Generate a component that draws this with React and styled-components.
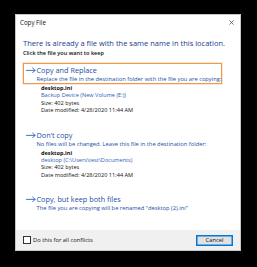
import React from 'react';
import styled, { createGlobalStyle } from 'styled-components';

const GlobalStyle = createGlobalStyle`
  html, body {
    margin: 0;
    padding: 0;
    background: #000;
  }
  body {
    font-family: "Open Sans", "Noto Sans", sans-serif;
    width: 257px;
    height: 267px;
    overflow: hidden;
  }
`;

const options = [
  {
    title: 'Copy and Replace',
    note: 'Replace the file in the destination folder with the file you are copying:',
    active: true,
    file: {
      name: 'desktop.ini',
      place: 'Backup Device (New Volume (E:))',
      size: 'Size: 402 bytes',
      date: 'Date modified: 4/28/2020 11:44 AM',
    },
  },
  {
    title: 'Don\u2019t copy',
    note: 'No files will be changed. Leave this file in the destination folder:',
    file: {
      name: 'desktop.ini',
      place: 'desktop (C:\\Users\\test\\Documents)',
      size: 'Size: 402 bytes',
      date: 'Date modified: 4/28/2020 11:44 AM',
    },
  },
  {
    title: 'Copy, but keep both files',
    note: 'The file you are copying will be renamed "desktop (2).ini"',
  },
];

const Arrow = () => (
  <ArrowIcon viewBox="0 0 10 6" width="10" height="6">
    <path d="M0.5 3.4 H9 M6.6 1 L9.2 3.4 L6.6 5.6" fill="none" stroke="#2a64b8" strokeWidth="0.9" strokeLinecap="round" strokeLinejoin="round" />
  </ArrowIcon>
);

const App = () => (
  <Page>
    <GlobalStyle />
    <Dialog>
      <TitleBar>
        <TitleText>Copy File</TitleText>
        <CloseIcon viewBox="0 0 6 6" width="5" height="5">
          <path d="M0.5 0.5 L5.5 5.5 M5.5 0.5 L0.5 5.5" stroke="#333" strokeWidth="0.8" />
        </CloseIcon>
      </TitleBar>
      <Body>
        <Heading>There is already a file with the same name in this location.</Heading>
        <Hint>Click the file you want to keep</Hint>
        {options.map((opt, i) => (
          <Option key={i} $first={i === 0}>
            <CommandLink $active={opt.active}>
              <LinkTitle>
                <Arrow />
                {opt.title}
              </LinkTitle>
              <LinkNote>{opt.note}</LinkNote>
            </CommandLink>
            {opt.file && (
              <FileInfo>
                <FileName>{opt.file.name}</FileName>
                <FilePlace>{opt.file.place}</FilePlace>
                <FileLine>{opt.file.size}</FileLine>
                <FileLine>{opt.file.date}</FileLine>
              </FileInfo>
            )}
          </Option>
        ))}
      </Body>
      <Footer>
        <CheckLabel>
          <CheckBox />
          Do this for all conflicts
        </CheckLabel>
        <CancelButton>Cancel</CancelButton>
      </Footer>
    </Dialog>
  </Page>
);

export default App;

const Page = styled.div`
  padding: 14px 0 0 15px;
`;

const Dialog = styled.div`
  width: 226px;
  height: 237px;
  background: #fff;
  display: flex;
  flex-direction: column;
  box-sizing: border-box;
  border: 1px solid #c8c8c8;
`;

const TitleBar = styled.div`
  height: 15px;
  display: flex;
  align-items: center;
  justify-content: space-between;
  padding: 0 6px 0 4px;
`;

const TitleText = styled.span`
  font-size: 6.2px;
  color: #111;
`;

const CloseIcon = styled.svg`
  display: block;
`;

const Body = styled.div`
  flex: 1;
  padding: 8px 0 0 7px;
  display: flex;
  flex-direction: column;
`;

const Heading = styled.div`
  font-size: 7.5px;
  line-height: 10px;
  color: #1a3c8e;
  white-space: nowrap;
`;

const Hint = styled.div`
  font-size: 5.6px;
  line-height: 10px;
  font-weight: 600;
  color: #111;
`;

const Option = styled.div`
  margin-top: ${p => (p.$first ? '5px' : '13px')};
  display: flex;
  flex-direction: column;
`;

const CommandLink = styled.div`
  width: 199px;
  height: 21px;
  box-sizing: border-box;
  border: 1px solid ${p => (p.$active ? '#ef9a48' : 'transparent')};
  box-shadow: ${p => (p.$active ? '0 0 0 0.5px rgba(245, 170, 100, 0.6)' : 'none')};
  padding: 1px 0 0 2px;
`;

const ArrowIcon = styled.svg`
  display: block;
  margin-right: 0.5px;
`;

const LinkTitle = styled.div`
  display: flex;
  align-items: center;
  font-size: 7.3px;
  line-height: 10px;
  color: #22509f;
  white-space: nowrap;
`;

const LinkNote = styled.div`
  font-size: 5.75px;
  line-height: 8px;
  color: #22509f;
  padding-left: 10.5px;
  white-space: nowrap;
`;

const FileInfo = styled.div`
  padding: 1px 0 0 18px;
  font-size: 5.6px;
  line-height: 7.4px;
  color: #111;
  white-space: nowrap;
`;

const FileName = styled.div`
  font-weight: 700;
`;

const FilePlace = styled.div`
  color: #2e5db0;
`;

const FileLine = styled.div``;

const Footer = styled.div`
  height: 20px;
  background: #f0f0f0;
  display: flex;
  align-items: center;
  justify-content: space-between;
  padding: 0 7px 0 7px;
`;

const CheckLabel = styled.label`
  display: flex;
  align-items: center;
  gap: 2px;
  font-size: 5.8px;
  color: #111;
`;

const CheckBox = styled.span`
  width: 6px;
  height: 6px;
  border: 1px solid #333;
  background: #fff;
`;

const CancelButton = styled.button`
  width: 37px;
  height: 11px;
  padding: 0;
  background: #e1e1e1;
  border: 1px solid #0078d7;
  box-shadow: inset 0 0 0 0.5px #0078d7;
  font-family: inherit;
  font-size: 5.8px;
  color: #111;
`;
